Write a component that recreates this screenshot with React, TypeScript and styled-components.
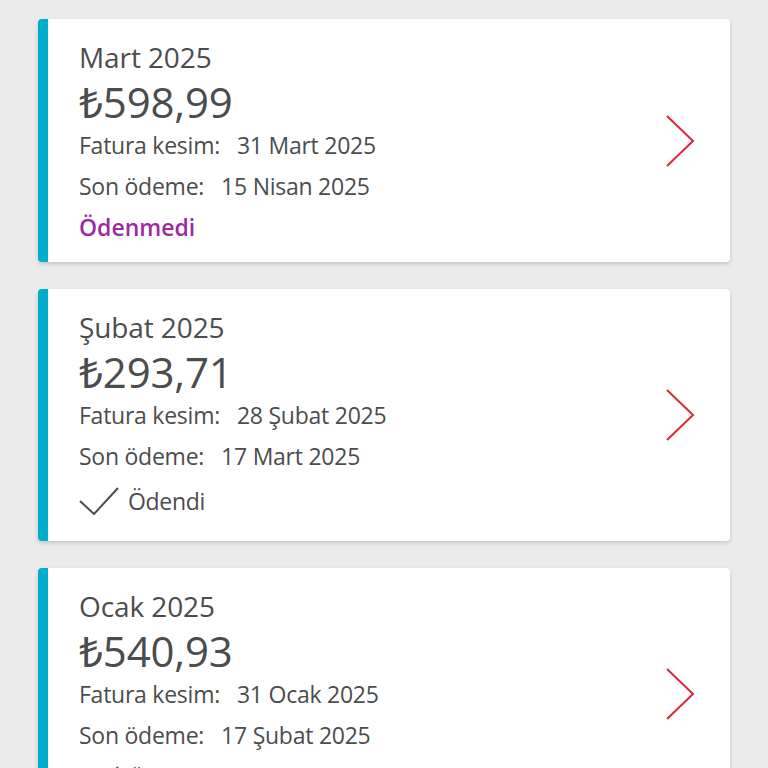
import styled, { createGlobalStyle } from "styled-components";

const GlobalStyle = createGlobalStyle`
  html, body {
    margin: 0;
    padding: 0;
    background: #ebebeb;
  }
  body {
    font-family: "Open Sans", "Noto Sans", sans-serif;
    color: #4a4d4e;
  }
`

const Page = styled.div`
  display: flex;
  flex-direction: column;
  gap: 27px;
  padding: 19px 38px 40px 38px;
  height: 768px;
  box-sizing: border-box;
  overflow: hidden;
`

const Card = styled.div`
  display: flex;
  align-items: center;
  flex-shrink: 0;
  background: #ffffff;
  border-left: 10px solid #00aecb;
  border-radius: 4px;
  box-shadow: 0px 2px 4px rgba(0, 0, 0, 0.16);
  padding: 0 35px 0 31px;
`

const Info = styled.div`
  flex: 1;
  display: flex;
  flex-direction: column;
  padding: 21px 0 15px 0;
`

const Period = styled.div`
  font-size: 28px;
  line-height: 34px;
  letter-spacing: -0.1px;
`

const Amount = styled.div`
  font-size: 42px;
  line-height: 44px;
  margin-top: 6px;
  letter-spacing: -0.2px;
`

const Row = styled.div`
  display: flex;
  align-items: center;
  gap: 17px;
  height: 41px;
  font-size: 23px;
  letter-spacing: -0.25px;
`

const Status = styled.div<{ $paid?: boolean }>`
  display: flex;
  align-items: center;
  gap: 9px;
  height: ${(p) => (p.$paid ? "50px" : "41px")};
  font-size: 23px;
  letter-spacing: ${(p) => (p.$paid ? "-0.3px" : "0px")};
  font-weight: ${(p) => (p.$paid ? 400 : 600)};
  color: ${(p) => (p.$paid ? "#4a4d4e" : "#9c2aa0")};
`

const Chevron = styled.svg`
  width: 30px;
  height: 52px;
  flex-shrink: 0;
`

interface Bill {
  period: string;
  amount: string;
  issued: string;
  due: string;
  paid: boolean;
}

const bills: Bill[] = [
  { period: "Mart 2025", amount: "₺598,99", issued: "31 Mart 2025", due: "15 Nisan 2025", paid: false },
  { period: "Şubat 2025", amount: "₺293,71", issued: "28 Şubat 2025", due: "17 Mart 2025", paid: true },
  { period: "Ocak 2025", amount: "₺540,93", issued: "31 Ocak 2025", due: "17 Şubat 2025", paid: true },
];

const BillCard = ({ bill }: { bill: Bill }) => {
  return (
    <Card>
      <Info>
        <Period>{bill.period}</Period>
        <Amount>{bill.amount}</Amount>
        <Row>
          <span>Fatura kesim:</span>
          <span>{bill.issued}</span>
        </Row>
        <Row>
          <span>Son ödeme:</span>
          <span>{bill.due}</span>
        </Row>
        {bill.paid ? (
          <Status $paid>
            <svg width="40" height="28" viewBox="0 0 40 28">
              <path d="M1 14 L15 27 L39 1" fill="none" stroke="#4a4d4e" strokeWidth="2" />
            </svg>
            Ödendi
          </Status>
        ) : (
          <Status>Ödenmedi</Status>
        )}
      </Info>
      <Chevron viewBox="0 0 30 52">
        <path d="M2 1 L28 26 L2 51" fill="none" stroke="#e2253a" strokeWidth="2" />
      </Chevron>
    </Card>
  )
}

export default function App() {
  return (
    <>
      <GlobalStyle />
      <Page>
        {bills.map((b) => (
          <BillCard key={b.period} bill={b} />
        ))}
      </Page>
    </>
  )
}
